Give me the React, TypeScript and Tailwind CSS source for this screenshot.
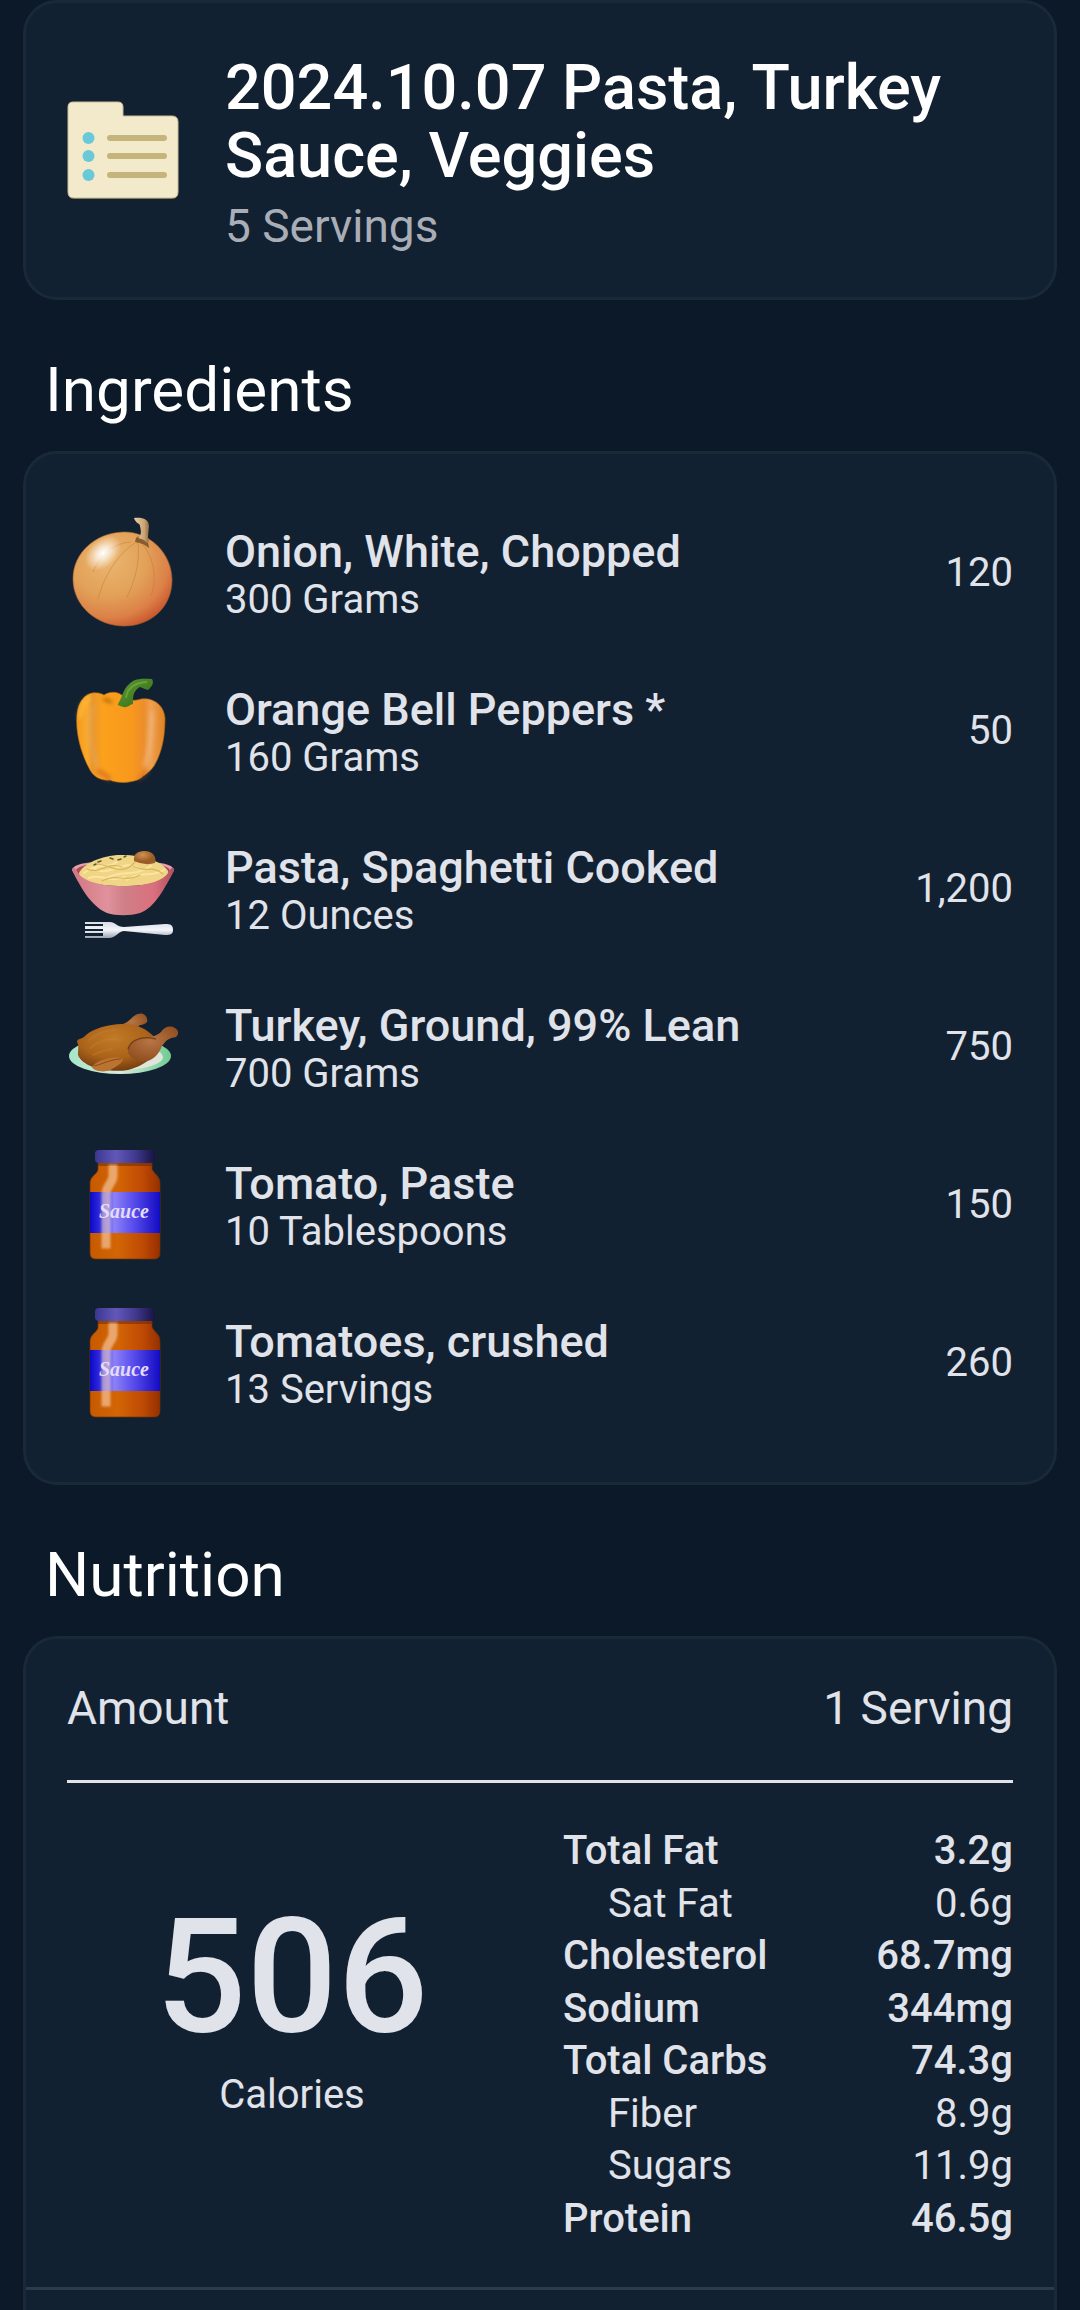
import type { ReactNode } from "react";

function FolderIcon() {
  return (
    <svg viewBox="0 0 112 112" className="size-28 shrink-0" aria-hidden="true">
      <path
        d="M6 6H51Q56 6 56 11V20H105Q111 20 111 26V97Q111 103 105 103H7Q1 103 1 97V11Q1 6 6 6Z"
        fill="#40392c"
      />
      <path
        d="M6 6H51Q56 6 56 11V20H105Q111 20 111 26V96Q111 102 105 102H7Q1 102 1 96V11Q1 6 6 6Z"
        fill="#f2eacb"
        stroke="#c9bd94"
        strokeWidth="1"
      />
      {[42, 60, 79].map((y) => (
        <g key={y}>
          <circle cx="21.500" cy={y} r="6" fill="#6ac9d8" />
          <path d={`M43 ${y}H97`} stroke="#c5b47b" strokeWidth="6" strokeLinecap="round" />
        </g>
      ))}
    </svg>
  );
}

function OnionIcon() {
  return (
    <svg viewBox="0 0 112 112" className="size-28 shrink-0" aria-hidden="true">
      <defs>
        <radialGradient id="onion-skin" cx="0.36" cy="0.3" r="0.76">
          <stop offset="0" stopColor="#ebb670" />
          <stop offset="0.5" stopColor="#e2a158" />
          <stop offset="0.8" stopColor="#dc8148" />
          <stop offset="1" stopColor="#c9552c" />
        </radialGradient>
        <radialGradient id="onion-shine">
          <stop offset="0" stopColor="#fff" />
          <stop offset="0.35" stopColor="#fff" stopOpacity="0.7" />
          <stop offset="1" stopColor="#fff" stopOpacity="0" />
        </radialGradient>
        <linearGradient id="onion-stem">
          <stop offset="0" stopColor="#ecd0a6" />
          <stop offset="0.7" stopColor="#c9a272" />
          <stop offset="1" stopColor="#8f6a42" />
        </linearGradient>
      </defs>
      <path
        d="M56 15C82 14 105 36 105 63C105 90 84 109 57 109C30 109 6 89 6 62C6 36 28 16 56 15Z"
        fill="url(#onion-skin)"
        stroke="#a9642f"
        strokeWidth="0.6"
      />
      <g fill="none" stroke="#b8763a" strokeWidth="0.8" opacity="0.55">
        <path d="M68 26C52 36 37 58 31 82" />
        <path d="M71 26C73 45 68 64 60 80" />
        <path d="M76 28C86 40 91 60 84 79" />
        <path d="M64 25C48 26 34 36 26 55" />
      </g>
      <ellipse cx="36" cy="36" rx="21" ry="14" transform="rotate(-42 36 36)" fill="url(#onion-shine)" />
      <path d="M69 21C74 17 82 22 82 31C77 27 73 26 68 25Z" fill="#8a5b2c" />
      <path
        d="M67 1C75 0 82 2 82 9L81 20C82 24 82 26 80 26C77 22 74 22 71 21C75 18 74 14 73 9C73 6 69 7 67 1Z"
        fill="url(#onion-stem)"
      />
    </svg>
  );
}

function PepperIcon() {
  return (
    <svg viewBox="0 0 112 112" className="size-28 shrink-0" aria-hidden="true">
      <defs>
        <linearGradient id="pepper-skin">
          <stop offset="0" stopColor="#f39a1c" />
          <stop offset="0.12" stopColor="#fba92a" />
          <stop offset="0.18" stopColor="#ea962c" />
          <stop offset="0.3" stopColor="#fba11c" />
          <stop offset="0.62" stopColor="#f8981d" />
          <stop offset="0.76" stopColor="#ec8e2b" />
          <stop offset="0.84" stopColor="#eea052" />
          <stop offset="1" stopColor="#e2811c" />
        </linearGradient>
        <linearGradient id="pepper-stem" x1="0" y1="0" x2="1" y2="1">
          <stop offset="0" stopColor="#5f9a33" />
          <stop offset="1" stopColor="#2f6a16" />
        </linearGradient>
        <filter id="pepper-soft">
          <feGaussianBlur stdDeviation="2" />
        </filter>
      </defs>
      <path
        d="M20 20C26 16 34 18 37 20C43 16 52 16 57 22C65 27 70 25 74 24C86 22 97 30 98 43C98 59 96 76 87 91C82 98 77 100 74 103C67 108 50 109 43 105C36 106 27 103 23 95C14 79 8 57 10 39C11 30 14 24 20 20Z"
        fill="url(#pepper-skin)"
        stroke="#b56712"
        strokeWidth="0.6"
      />
      <g fill="none" strokeLinecap="round" filter="url(#pepper-soft)">
        <path d="M26 32C20 46 23 74 30 90" stroke="#dfa964" strokeWidth="3" opacity="0.8" />
        <path d="M85 38C84 60 83 76 78 90" stroke="#f2bc87" strokeWidth="4" opacity="0.7" />
        <path d="M32 96L42 103" stroke="#cf6820" strokeWidth="4" opacity="0.8" />
        <path d="M72 103L80 96" stroke="#cf6820" strokeWidth="3" opacity="0.6" />
        <path d="M37 24L44 27" stroke="#8a4a10" strokeWidth="2" />
        <path d="M22 23Q15 27 13 42" stroke="#ffc653" strokeWidth="3" opacity="0.7" />
      </g>
      <path
        d="M51 29C56 21 56 12 66 6C72 3 80 4 85 4C88 9 83 13 81 15C77 14 76 13 73 12C69 14 66 18 66 25L66 29C62 30 60 33 57 32C53 31 50 30 51 29Z"
        fill="url(#pepper-stem)"
      />
      <path d="M59 23C60 14 66 8 80 7" fill="none" stroke="#7cb248" strokeWidth="2" opacity="0.6" />
    </svg>
  );
}

function PastaIcon() {
  return (
    <svg viewBox="0 0 112 112" className="size-28 shrink-0" aria-hidden="true">
      <defs>
        <linearGradient id="bowl-body">
          <stop offset="0" stopColor="#d27682" />
          <stop offset="0.35" stopColor="#e0929c" />
          <stop offset="0.5" stopColor="#cf8088" />
          <stop offset="0.8" stopColor="#da707d" />
          <stop offset="1" stopColor="#ad515e" />
        </linearGradient>
        <linearGradient id="fork-metal" x1="0" y1="0" x2="0" y2="1">
          <stop offset="0" stopColor="#d8dce6" />
          <stop offset="0.5" stopColor="#f4f6fa" />
          <stop offset="1" stopColor="#9aa2b2" />
        </linearGradient>
        <radialGradient id="meatball" cx="0.4" cy="0.3">
          <stop offset="0" stopColor="#cf934f" />
          <stop offset="1" stopColor="#9c5c26" />
        </radialGradient>
      </defs>
      <path d="M5 37C6 31 20 28 56 28C92 28 106 31 107 37L101 48H11Z" fill="#e5a0a8" />
      <path d="M9 37C12 32 26 30 56 30C88 30 100 32 103 37L98 46H14Z" fill="#a84e5a" />
      <path d="M12 40C16 32 30 24 50 22C76 21 96 29 101 38C102 45 90 53 56 53C26 53 12 47 12 40Z" fill="#efd585" />
      <g fill="none" strokeLinecap="round">
        <path
          d="M17 40C31 28 41 38 52 27M27 35C41 46 57 24 72 36M40 45C56 36 66 45 84 33M60 47C74 37 85 45 97 37M22 45C34 40 42 50 58 44"
          stroke="#fae6a2"
          strokeWidth="2"
        />
        <path
          d="M20 36C34 42 39 28 55 34M35 48C49 40 58 50 73 42M66 33C80 41 84 31 96 41M30 31C44 32 55 44 68 29"
          stroke="#d9b65c"
          strokeWidth="1.200"
        />
        <path d="M31 29L34 28M43 25L46 26M51 27L54 26M57 24L59 23M27 32L29 31" stroke="#57602e" strokeWidth="1.500" />
      </g>
      <path d="M67 28C66 20 72 18 78 18C85 18 90 23 88 30Q78 33 67 28Z" fill="url(#meatball)" />
      <path
        d="M5 37C5 34 8 34 9 37C15 49 34 53 56 53C79 53 97 49 103 37C105 33 108 35 107 38C98 54 89 74 73 80C63 83 49 83 40 80C24 73 14 55 5 37Z"
        fill="url(#bowl-body)"
      />
      <path
        d="M18 89H43C48 89 50 94 57 94L98 91C104 91 106 92 106 97C106 101 104 102 98 102L57 98C50 99 49 105 42 105H18V103H36V100H18V98H36V96H18V93H36V91H18Z"
        fill="url(#fork-metal)"
      />
    </svg>
  );
}

function TurkeyIcon() {
  return (
    <svg viewBox="0 0 112 112" className="size-28 shrink-0" aria-hidden="true">
      <defs>
        <linearGradient id="plate">
          <stop offset="0" stopColor="#a5e6c7" />
          <stop offset="0.5" stopColor="#d7ebdf" />
          <stop offset="1" stopColor="#70cb92" />
        </linearGradient>
        <radialGradient id="turkey-body" cx="0.45" cy="0.3" r="0.7">
          <stop offset="0" stopColor="#c17a26" />
          <stop offset="0.6" stopColor="#ab631a" />
          <stop offset="1" stopColor="#753d10" />
        </radialGradient>
        <radialGradient id="turkey-leg" cx="0.45" cy="0.4" r="0.65">
          <stop offset="0" stopColor="#b87645" />
          <stop offset="1" stopColor="#8f4d1f" />
        </radialGradient>
      </defs>
      <ellipse cx="53" cy="65" rx="51" ry="18" fill="url(#plate)" />
      <ellipse cx="54" cy="66" rx="42" ry="13" fill="#e0e5dc" />
      <path d="M50 34C62 34 65 24 71 23C76 21 80 25 80 28C82 32 76 34 73 34C69 37 68 43 60 43Z" fill="url(#turkey-leg)" />
      <path
        d="M10 51C10 47 15 49 19 44C26 38 40 33 56 33C72 32 84 41 91 50C95 61 80 74 61 79C42 82 16 77 11 64C11 58 12 54 10 51Z"
        fill="url(#turkey-body)"
      />
      <g fill="none" stroke="#d18a36" strokeWidth="2" strokeLinecap="round" opacity="0.25">
        <path d="M22 49Q34 39 49 39" />
        <path d="M23 57Q37 46 53 49" />
        <path d="M26 64Q37 59 45 58" />
      </g>
      <path
        d="M63 53C68 44 84 50 94 41C97 36 103 34 108 37C112 39 112 44 109 46C103 47 100 48 95 55C91 65 84 72 73 70C62 68 58 60 63 53Z"
        fill="url(#turkey-leg)"
      />
      <path d="M61 58C64 48 76 45 89 48" fill="none" stroke="#59270b" strokeWidth="1.500" opacity="0.6" />
      <path d="M25 76C29 70 43 65 54 67C60 69 49 76 43 79C37 82 26 80 25 76Z" fill="#bb7332" />
      <path d="M27 75C36 73 44 68 54 68" fill="none" stroke="#71390f" strokeWidth="1" opacity="0.7" />
    </svg>
  );
}

function SauceIcon() {
  return (
    <svg viewBox="0 0 112 112" className="size-28 shrink-0" aria-hidden="true">
      <defs>
        <linearGradient id="jar-lid">
          <stop offset="0" stopColor="#3b3790" />
          <stop offset="0.35" stopColor="#6257b8" />
          <stop offset="0.65" stopColor="#443b93" />
          <stop offset="1" stopColor="#171442" />
        </linearGradient>
        <linearGradient id="jar-body">
          <stop offset="0" stopColor="#c75a00" />
          <stop offset="0.4" stopColor="#d36505" />
          <stop offset="0.75" stopColor="#bf4a04" />
          <stop offset="1" stopColor="#963000" />
        </linearGradient>
        <linearGradient id="jar-label">
          <stop offset="0" stopColor="#0b08c4" />
          <stop offset="0.15" stopColor="#332de0" />
          <stop offset="0.35" stopColor="#8c80f6" />
          <stop offset="0.6" stopColor="#5c50ee" />
          <stop offset="1" stopColor="#130bc2" />
        </linearGradient>
        <filter id="jar-soft" filterUnits="userSpaceOnUse" x="0" y="0" width="112" height="112">
          <feGaussianBlur stdDeviation="1.200" />
        </filter>
      </defs>
      <path
        d="M31 12H85V20C87 25 93 27 93 34V104Q93 110 87 110H29Q23 110 23 104V34C23 27 31 25 31 20Z"
        fill="url(#jar-body)"
        stroke="#713207"
        strokeWidth="0.700"
      />
      <path d="M31 14H85V17H31Z" fill="#612504" opacity="0.5" />
      <rect x="28" y="1" width="60" height="13" rx="4" fill="url(#jar-lid)" />
      <rect x="23" y="43" width="70" height="41" fill="url(#jar-label)" />
      <path
        d="M46 20V27C46 34 39 37 39 45V95"
        fill="none"
        stroke="#ffdfc4"
        strokeWidth="9"
        strokeLinecap="square"
        opacity="0.55"
        filter="url(#jar-soft)"
      />
      <text
        x="57"
        y="69"
        textAnchor="middle"
        fill="#e2dcff"
        className="font-['Liberation_Serif',serif] text-[20px] font-bold italic"
      >
        Sauce
      </text>
    </svg>
  );
}

type Ingredient = { icon: ReactNode; name: string; amount: string; calories: string };

const ingredients: Ingredient[] = [
  { icon: <OnionIcon />, name: "Onion, White, Chopped", amount: "300 Grams", calories: "120" },
  { icon: <PepperIcon />, name: "Orange Bell Peppers *", amount: "160 Grams", calories: "50" },
  { icon: <PastaIcon />, name: "Pasta, Spaghetti Cooked", amount: "12 Ounces", calories: "1,200" },
  { icon: <TurkeyIcon />, name: "Turkey, Ground, 99% Lean", amount: "700 Grams", calories: "750" },
  { icon: <SauceIcon />, name: "Tomato, Paste", amount: "10 Tablespoons", calories: "150" },
  { icon: <SauceIcon />, name: "Tomatoes, crushed", amount: "13 Servings", calories: "260" },
];

const nutrients = [
  { label: "Total Fat", value: "3.2g", sub: false },
  { label: "Sat Fat", value: "0.6g", sub: true },
  { label: "Cholesterol", value: "68.7mg", sub: false },
  { label: "Sodium", value: "344mg", sub: false },
  { label: "Total Carbs", value: "74.3g", sub: false },
  { label: "Fiber", value: "8.9g", sub: true },
  { label: "Sugars", value: "11.9g", sub: true },
  { label: "Protein", value: "46.5g", sub: false },
];

function SectionTitle({ children }: { children: ReactNode }) {
  return (
    <h2 className="px-[22px] pt-[50px] pb-[21px] text-[62px] leading-[80px] font-normal text-white">{children}</h2>
  );
}

export default function App() {
  return (
    <main className="flex min-h-screen flex-col bg-[#0c1928] px-[23px] font-['Roboto',sans-serif] text-[#e1e3ea]">
      <header className="flex items-center gap-[46px] rounded-[34px] border-3 border-[#1a2937] bg-[#122131] px-[41px] pt-[51px] pb-[47px]">
        <FolderIcon />
        <div className="min-w-0 flex-1">
          <h1 className="text-[63px] leading-[68px] font-medium text-white">
            2024.10.07 Pasta, Turkey Sauce, Veggies
          </h1>
          <p className="mt-3 text-[46px] leading-[48px] text-[#a9aeb6]">5 Servings</p>
        </div>
      </header>

      <section>
        <SectionTitle>Ingredients</SectionTitle>
        <ul className="rounded-[34px] border-3 border-[#1a2937] bg-[#122131] px-[41px] py-10">
          {ingredients.map((item) => (
            <li key={item.name} className="flex h-[158px] items-center gap-[46px]">
              {item.icon}
              <div className="min-w-0 flex-1 pt-2">
                <h3 className="text-[45px] leading-[46px] font-medium">{item.name}</h3>
                <p className="text-[40px] leading-[50px]">{item.amount}</p>
              </div>
              <span className="text-[40px] leading-[50px]">{item.calories}</span>
            </li>
          ))}
        </ul>
      </section>

      <section className="flex flex-1 flex-col">
        <SectionTitle>Nutrition</SectionTitle>
        <div className="flex-1 rounded-t-[34px] border-3 border-b-0 border-[#1a2937] bg-[#122131]">
          <div className="mx-[41px] flex items-center justify-between border-b-3 border-[#e1e3ea] pt-[37px] pb-[40px] text-[46px] leading-[64px]">
            <span>Amount</span>
            <span>1 Serving</span>
          </div>
          <div className="grid grid-cols-2 gap-x-[46px] border-b-3 border-[#2b3b4b] px-[41px] py-[42px]">
            <div className="pt-[62px] text-center">
              <p className="text-[160px] leading-[180px] font-medium">506</p>
              <p className="text-[40px] leading-[56px]">Calories</p>
            </div>
            <table className="h-[420px] w-full text-[40px] leading-[48px]">
              <tbody>
                {nutrients.map((n) => (
                  <tr key={n.label} className={n.sub ? "font-normal" : "font-medium"}>
                    <th scope="row" className={n.sub ? "pl-[45px] text-left font-normal" : "text-left font-medium"}>
                      {n.label}
                    </th>
                    <td className="text-right">{n.value}</td>
                  </tr>
                ))}
              </tbody>
            </table>
          </div>
        </div>
      </section>
    </main>
  );
}
